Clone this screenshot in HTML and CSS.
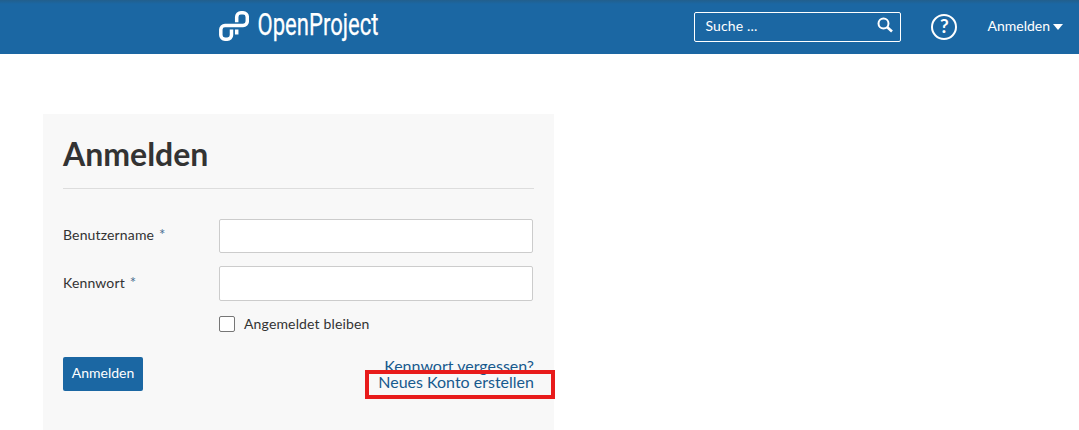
FILE: index.html
```html
<!DOCTYPE html>
<html lang="de">
<head>
<meta charset="utf-8">
<title>OpenProject</title>
<link rel="stylesheet" href="styles.css">
</head>
<body>
<header class="topbar">
  <a class="brand" aria-label="OpenProject">
    <svg class="brand-mark" width="30" height="30" viewBox="0 0 30 30" fill="none" stroke="#fff" stroke-width="3.500">
      <path d="M17.700 11.300V6a4.200 4.200 0 0 1 4.200-4.200h2.200A4.200 4.200 0 0 1 28.300 6v4.200a4.200 4.200 0 0 1-4.200 4.200H6a4.200 4.200 0 0 0-4.200 4.200V24A4.200 4.200 0 0 0 6 28.200h2.300A4.200 4.200 0 0 0 12.500 24v-5.500"/>
      <path d="M17.700 18.500v5"/>
    </svg>
    <svg class="brand-name" width="124" height="36" viewBox="0 0 124 36"><text x="0.500" y="25" textLength="121" lengthAdjust="spacingAndGlyphs">OpenProject</text></svg>
  </a>
  <div class="tools">
    <div class="search"><span>Suche ...</span>
      <svg class="lens" width="16" height="16" viewBox="0 0 16 16" fill="none" stroke="#fff" stroke-width="2"><circle cx="6.500" cy="6.500" r="5"/><path d="M10 10l5 4.500" stroke-width="2.600"/></svg>
    </div>
    <div class="help">?</div>
    <div class="account"><span>Anmelden</span><i class="caret"></i></div>
  </div>
</header>
<main class="login">
  <h1>Anmelden</h1>
  <form>
    <div class="field"><label for="u">Benutzername <span class="req">*</span></label><input id="u" class="text" type="text"></div>
    <div class="field tall"><label for="p">Kennwort <span class="req">*</span></label><input id="p" class="text" type="password"></div>
    <label class="remember"><input class="check" type="checkbox">Angemeldet bleiben</label>
    <div class="actions">
      <button type="button">Anmelden</button>
      <div class="links"><a>Kennwort vergessen?</a><a class="create">Neues Konto erstellen</a></div>
    </div>
  </form>
</main>
</body>
</html>
```

FILE: styles.css
```css
* { box-sizing: border-box; }
body { margin: 0; height: 430px; overflow: hidden; background: #fff; color: #333; font: 14px/20px Lato, sans-serif; }
.topbar { height: 54px; padding: 0 16px 0 219px; display: flex; justify-content: space-between; background: linear-gradient(#225f8d, #1b67a3 4px); color: #fff; }
.brand { display: flex; padding-top: 11px; }
.brand-name { margin-left: 8px; margin-top: -1px; overflow: visible; }
.brand-name text { font: 31px Roboto, sans-serif; fill: #fff; stroke: #fff; stroke-width: .25px; }
.tools { display: flex; align-items: center; }
.search { width: 207px; height: 30px; padding: 0 7px 0 10px; border: 1px solid #fff; border-radius: 2px; display: flex; align-items: center; justify-content: space-between; letter-spacing: .15px; }
.search span, .account span { padding-bottom: 2px; }
.lens { margin-bottom: 4px; }
.help { width: 26px; height: 26px; margin-left: 30px; border: 2px solid #fff; border-radius: 50%; font: bold 19px/20px Lato, sans-serif; text-align: center; }
.account { margin-left: 30px; display: flex; align-items: center; }
.caret { margin-left: 3px; border: 5px solid transparent; border-top: 6px solid #fff; border-bottom: 0; }
.login { width: 511px; height: 316px; margin: 60px 0 0 43px; padding: 20px 20px 0; background: #f8f8f8; }
h1 { margin: 0 0 30px; height: 55px; font: bold 32px/40px Lato, sans-serif; border-bottom: 1px solid #ddd; }
.field { display: flex; align-items: center; height: 34px; margin-bottom: 13px; letter-spacing: .15px; }
.field label { width: 156px; padding-bottom: 2px; }
.tall { height: 35px; }
.req { margin-left: 1px; color: #4a6f91; font-size: 15px; line-height: 18px; }
.text { width: 314px; height: 100%; padding: 0 8px; border: 1px solid #ccc; border-radius: 2px; background: #fff; }
.remember { display: flex; align-items: center; height: 20px; margin: 1px 0 0 156px; letter-spacing: .15px; }
.check { appearance: none; width: 16px; height: 16px; margin: 0 9px 0 0; border: 1px solid #767676; border-radius: 2px; background: #fff; }
.actions { display: flex; justify-content: space-between; margin-top: 23px; }
button { width: 80px; height: 34px; padding: 0 0 3px; border: 0; border-radius: 2px; background: #1b67a3; color: #fff; font: 14px Lato, sans-serif; }
.links { display: flex; flex-direction: column; align-items: flex-end; padding: 1px 0 0; font-size: 16px; line-height: 16px; color: #175a8e; }
.create { position: relative; }
.create::before { content: ""; position: absolute; inset: -4px -21px -9px -13px; border: 4px solid #e81b1b; }
```
